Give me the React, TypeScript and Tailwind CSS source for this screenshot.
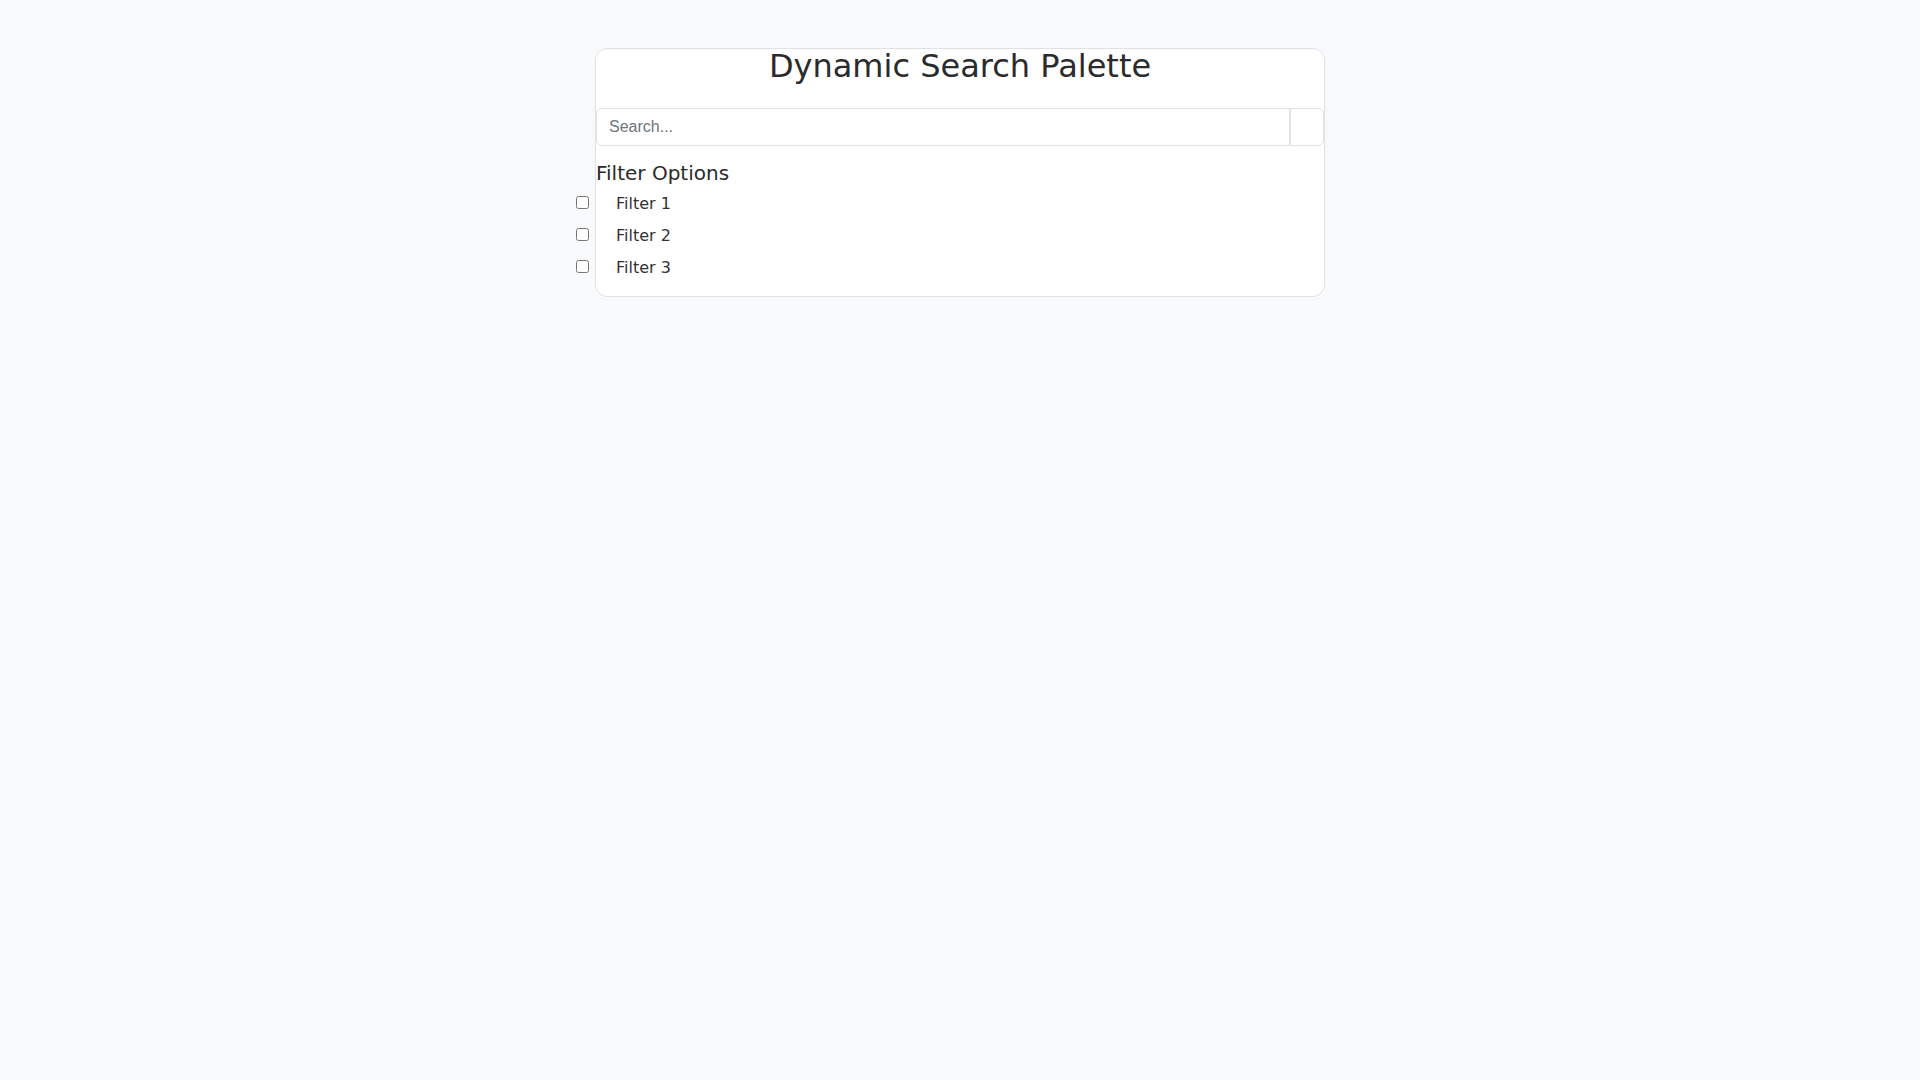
import type React from "react"

const filters = ["Filter 1", "Filter 2", "Filter 3"]

const App: React.FC = () => {
  return (
    <div className="min-h-screen bg-[#f8f9fa] pt-[48px] font-['DejaVu_Sans',sans-serif] text-[#333]">
      {/* Palette card */}
      <div className="mx-auto w-[730px] rounded-xl border border-[#dee2e6] bg-white pb-[16px]">
        <h1 className="mt-[1px] text-center text-[32px] leading-none text-[#2b2b2b]">Dynamic Search Palette</h1>

        {/* Search bar */}
        <div className="mt-[26px] flex">
          <input
            type="text"
            placeholder="Search..."
            className="h-[38px] flex-1 rounded-l-md border border-[#dee2e6] bg-white px-3 font-['Liberation_Sans',sans-serif] text-base text-[#212529] outline-none placeholder:text-[#6c757d]"
          />
          <button type="button" className="h-[38px] w-[34px] rounded-r-md border border-[#dee2e6] bg-white" />
        </div>

        {/* Filters */}
        <h2 className="mt-[15px] text-[20px] leading-[24px] text-[#2b2b2b]">Filter Options</h2>
        <div className="mt-[7px] flex flex-col gap-[8px]">
          {filters.map((f) => (
            <label key={f} className="flex h-6 items-center">
              <input type="checkbox" className="m-0 mb-[3px] -ml-[20px] h-[13px] w-[13px]" />
              <span className="ml-[27px] text-base leading-6 text-[#333]">{f}</span>
            </label>
          ))}
        </div>
      </div>
    </div>
  )
}

export default App
